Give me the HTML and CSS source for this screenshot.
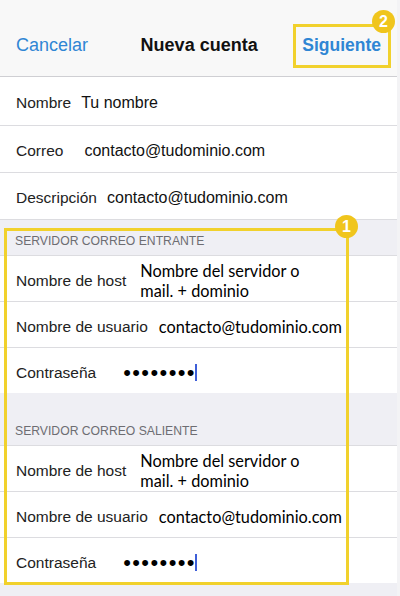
FILE: index.html
```html
<!DOCTYPE html>
<html lang="es">
<head>
  <meta charset="UTF-8" />
  <meta name="viewport" content="width=device-width, initial-scale=1.0" />
  <title>Nueva cuenta</title>
  <link rel="stylesheet" href="styles.css">
</head>
<body>
  <div class="screen">
    <!-- Top bar -->
    <header class="navbar">
      <span class="nav-link">Cancelar</span>
      <span class="nav-title">Nueva cuenta</span>
      <span class="nav-link nav-next">Siguiente</span>
    </header>

    <!-- Account info -->
    <section class="group">
      <div class="row">
        <span class="label">Nombre</span>
        <span class="value gap-sm">Tu nombre</span>
      </div>
      <div class="row">
        <span class="label">Correo</span>
        <span class="value gap-lg">contacto@tudominio.com</span>
      </div>
      <div class="row">
        <span class="label">Descripción</span>
        <span class="value gap-sm">contacto@tudominio.com</span>
      </div>
    </section>

    <!-- Incoming server -->
    <div class="group-header">SERVIDOR CORREO ENTRANTE</div>
    <section class="group bordered">
      <div class="row">
        <span class="label">Nombre de host</span>
        <span class="value pasted host">Nombre del servidor o<br>mail. + dominio</span>
      </div>
      <div class="row">
        <span class="label">Nombre de usuario</span>
        <span class="value pasted user">contacto@tudominio.com</span>
      </div>
      <div class="row">
        <span class="label">Contraseña</span>
        <span class="password">&bull;&bull;&bull;&bull;&bull;&bull;&bull;&bull;</span><span class="caret"></span>
      </div>
    </section>

    <!-- Outgoing server -->
    <div class="group-header tall">SERVIDOR CORREO SALIENTE</div>
    <section class="group bordered">
      <div class="row">
        <span class="label">Nombre de host</span>
        <span class="value pasted host">Nombre del servidor o<br>mail. + dominio</span>
      </div>
      <div class="row">
        <span class="label">Nombre de usuario</span>
        <span class="value pasted user">contacto@tudominio.com</span>
      </div>
      <div class="row">
        <span class="label">Contraseña</span>
        <span class="password">&bull;&bull;&bull;&bull;&bull;&bull;&bull;&bull;</span><span class="caret"></span>
      </div>
    </section>

    <!-- Highlight annotations -->
    <div class="highlight hl-servers"></div>
    <div class="highlight hl-next"></div>
    <span class="badge badge-1">1</span>
    <span class="badge badge-2">2</span>
  </div>
</body>
</html>
```

FILE: styles.css
```css
/* Page */
body {
  margin: 0;
  font-family: "Liberation Sans", Arial, sans-serif;
  background: #efeff4;
  color: #1c1c1c;
}
.screen {
  position: relative;
  width: 397px;
  height: 596px;
  overflow: hidden;
  background: #efeff4;
  border-right: 3px solid #f3f3f5;
}

/* Navigation bar */
.navbar {
  height: 62px;
  padding: 14px 16px 0;
  display: flex;
  align-items: center;
  justify-content: space-between;
  background: #f8f8f8;
  border-bottom: 1px solid #cfcfd3;
}
.nav-link {
  color: #2f86d4;
  font-size: 18px;
}
.nav-title {
  font-size: 18px;
  font-weight: bold;
  color: #111;
  margin-left: 8px;
}
.nav-next {
  font-weight: bold;
  font-size: 17.5px;
}

/* Grouped rows */
.group {
  background: #fff;
}
.group.bordered {
  border-top: 1px solid #dcdce0;
}
.row {
  height: 42px;
  padding-top: 4px;
  display: flex;
  align-items: center;
  padding-left: 16px;
  border-bottom: 1px solid #dcdce0;
}
.row:first-child {
  height: 44px;
}
.group.bordered .row,
.group.bordered .row:first-child {
  height: 41px;
}
.group.bordered .row:last-child {
  border-bottom: none;
}
.label {
  font-size: 15.5px;
  color: #222;
}
.value {
  font-size: 16px;
  color: #111;
}
.gap-sm {
  margin-left: 10px;
}
.gap-lg {
  margin-left: 21px;
}

/* Values typed in from another document */
.pasted {
  font-family: Lato, "Open Sans", sans-serif;
  font-size: 16.3px;
  color: #000;
}
.host {
  margin-left: 14px;
  line-height: 20px;
}
.user {
  margin-left: 11px;
}
.password {
  margin-left: 27px;
  font-size: 22px;
  letter-spacing: 1.4px;
  color: #000;
  line-height: 20px;
}
.caret {
  display: inline-block;
  width: 2px;
  height: 17px;
  margin-left: -1px;
  background: #3e5fd8;
}

/* Section headers */
.group-header {
  height: 35px;
  box-sizing: border-box;
  display: flex;
  align-items: flex-end;
  padding: 0 0 7px 15px;
  font-size: 12.2px;
  line-height: 14px;
  color: #6d6d72;
}
.group-header.tall {
  height: 52px;
}

/* Yellow annotations */
.highlight {
  position: absolute;
  border: 3px solid #f1d12c;
}
.hl-servers {
  left: 4px;
  top: 228px;
  width: 339px;
  height: 351px;
}
.hl-next {
  left: 293px;
  top: 24px;
  width: 92px;
  height: 38px;
}
.badge {
  position: absolute;
  width: 23px;
  height: 23px;
  border-radius: 50%;
  background: #f0c51c;
  color: #fff;
  font-weight: bold;
  font-size: 16px;
  line-height: 23px;
  text-align: center;
}
.badge-1 {
  left: 335px;
  top: 215px;
}
.badge-2 {
  left: 372px;
  top: 10px;
}
```
